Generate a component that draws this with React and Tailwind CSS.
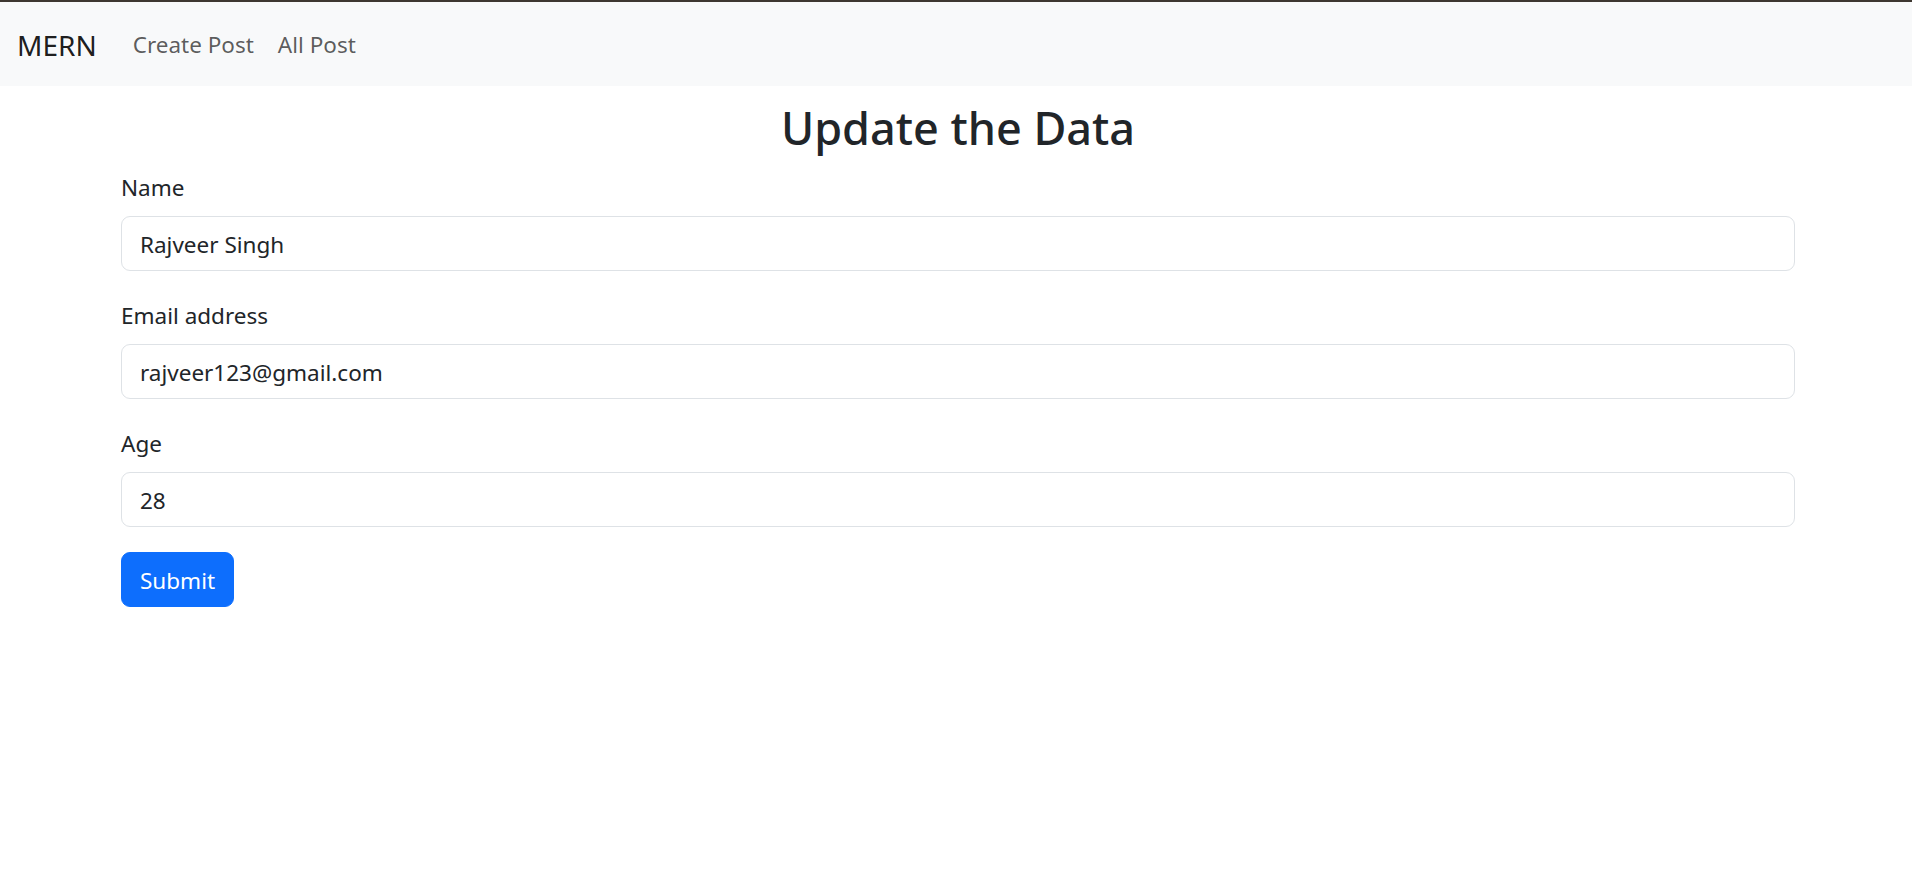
import React, { useState } from "react";

export default function App() {
  const [form, setForm] = useState({
    name: "Rajveer Singh",
    email: "rajveer123@gmail.com",
    age: "28",
  });

  const update = key => e => setForm({ ...form, [key]: e.target.value });

  const fields = [
    { key: "name", label: "Name", type: "text" },
    { key: "email", label: "Email address", type: "email" },
    { key: "age", label: "Age", type: "number" },
  ];

  return (
    <div
      className="min-h-screen bg-white text-[#212529]"
      style={{ fontFamily: '"Noto Sans", "Open Sans", sans-serif' }}
    >
      {/* navbar */}
      <nav className="h-[86px] border-t-2 border-[#3d3731] bg-[#f8f9fa] pl-[17px] pr-[18px] pt-[2px] flex items-center">
        <span className="text-[28px] leading-[45px] text-black/90 mr-6">MERN</span>
        <a className="px-3 py-3 text-[22.5px] leading-[36px] text-black/65">Create Post</a>
        <a className="px-3 py-3 text-[22.5px] leading-[36px] text-black/65">All Post</a>
      </nav>

      {/* form */}
      <div className="mx-auto w-[1710px] pl-[20px] pr-[16px]">
        <h2 className="mt-[13px] mb-[11px] text-center text-[45px] leading-[58px] font-medium">
          Update the Data
        </h2>
        <form onSubmit={e => e.preventDefault()}>
          {fields.map(f => (
            <div key={f.key} className="mb-[25px]">
              <label className="block pt-[2px] mb-[10px] text-[22.5px] leading-[36px]">{f.label}</label>
              <input
                type={f.type}
                value={form[f.key]}
                onChange={update(f.key)}
                className="block w-full h-[55px] px-[18px] pt-[2px] text-[22.5px] leading-[36px] text-[#212529] bg-white border border-[#dee2e6] rounded-[9px] outline-none"
              />
            </div>
          ))}
          <button
            type="submit"
            className="h-[55px] px-[18px] pt-[2px] text-[22.5px] leading-[36px] text-white bg-[#0d6efd] border border-[#0d6efd] rounded-[9px]"
          >
            Submit
          </button>
        </form>
      </div>
    </div>
  );
}
